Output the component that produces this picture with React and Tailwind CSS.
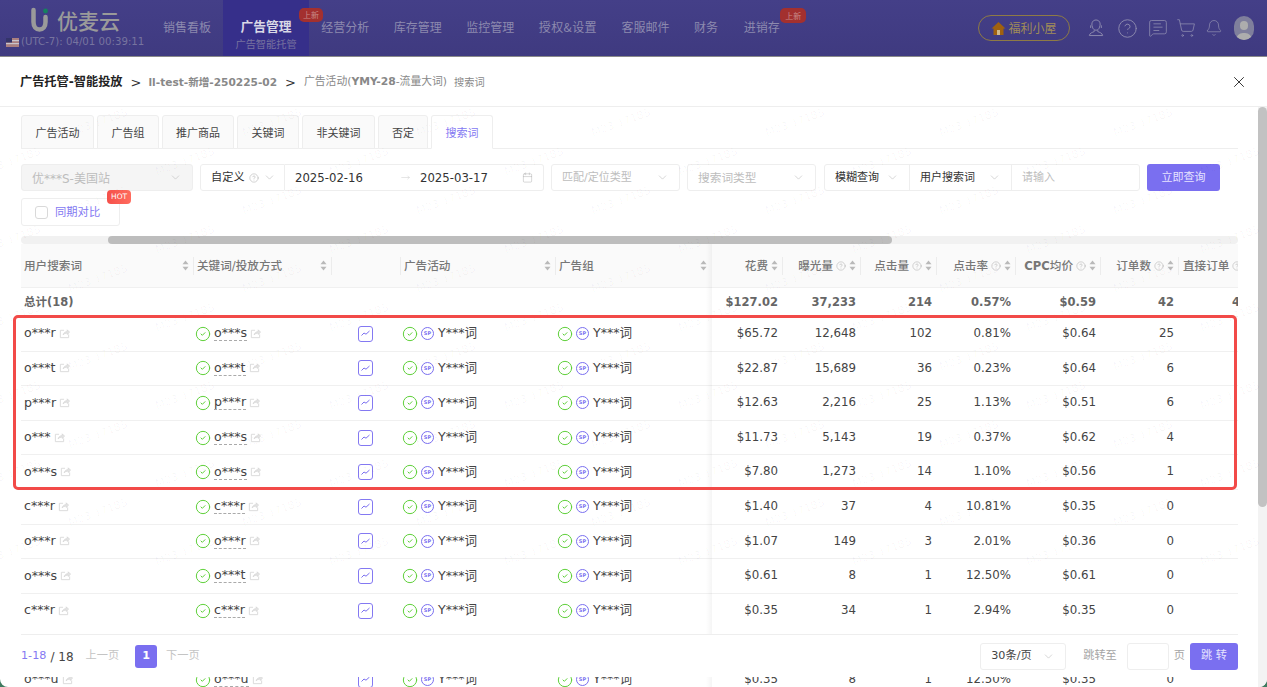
import React from "react";
import { Bell, ChevronDown, CircleCheck, CircleHelp, MessageSquareText, ShoppingCart, X, Calendar, MoveRight } from "lucide-react";

const gridCols =
  "grid grid-cols-[172px_138px_69px_155px_156px_71px_78px_76px_79px_85px_78px_72px]";

const navItems = ["经营分析", "库存管理", "监控管理", "授权&设置", "客服邮件", "财务"];

const tabs = [
  { label: "广告活动", width: "w-[73px]" },
  { label: "广告组", width: "w-[62px]" },
  { label: "推广商品", width: "w-[72px]" },
  { label: "关键词", width: "w-[62px]" },
  { label: "非关键词", width: "w-[73px]" },
  { label: "否定", width: "w-[50px]" },
];

// null = row that sits fully behind the sticky pagination
const rows = [
  ["o***r", "o***s", "$65.72", "12,648", "102", "0.81%", "$0.64", "25"],
  ["o***t", "o***t", "$22.87", "15,689", "36", "0.23%", "$0.64", "6"],
  ["p***r", "p***r", "$12.63", "2,216", "25", "1.13%", "$0.51", "6"],
  ["o***", "o***s", "$11.73", "5,143", "19", "0.37%", "$0.62", "4"],
  ["o***s", "o***s", "$7.80", "1,273", "14", "1.10%", "$0.56", "1"],
  ["c***r", "c***r", "$1.40", "37", "4", "10.81%", "$0.35", "0"],
  ["o***r", "o***r", "$1.07", "149", "3", "2.01%", "$0.36", "0"],
  ["o***s", "o***t", "$0.61", "8", "1", "12.50%", "$0.61", "0"],
  ["c***r", "c***r", "$0.35", "34", "1", "2.94%", "$0.35", "0"],
  null,
  ["o***u", "o***u", "$0.35", "8", "1", "12.50%", "$0.35", "0"],
];

function SortCaret() {
  return (
    <svg width="7" height="11" viewBox="0 0 7 11" className="shrink-0 text-[#b9b9b9]" fill="currentColor">
      <path d="M3.5 0.5 L6.5 4.2 H0.5 Z" />
      <path d="M3.5 10.5 L6.5 6.8 H0.5 Z" />
    </svg>
  );
}

function ShareIcon() {
  return (
    <svg width="11" height="11" viewBox="0 0 12 12" fill="none" stroke="#d9d9d9" strokeWidth="1" className="mb-[1px] shrink-0">
      <path d="M5.5 2.5H1.5V10.5H10.5V7" />
      <path d="M4.5 7.5C5 5 7 4 9 4V2L11.5 4.6L9 7V5.5C7.3 5.5 5.6 6 4.5 7.5Z" fill="#e6e6e6" />
    </svg>
  );
}

function ChartButton() {
  return (
    <span className="flex h-[16px] w-[15px] items-center justify-center rounded-[3px] border border-[#8479f2]">
      <svg width="9" height="7" viewBox="0 0 9 7" fill="none" stroke="#7a6ff0" strokeWidth="1">
        <path d="M0.5 5.5L3 3L5 4.2L8.5 1" />
      </svg>
    </span>
  );
}

function SpBadge() {
  return (
    <span className="flex h-[13px] w-[13px] shrink-0 items-center justify-center rounded-full border border-[#7a6ff0] text-[5px] font-bold leading-none text-[#7a6ff0]">
      SP
    </span>
  );
}

function CampaignCell() {
  return (
    <div className="flex items-center gap-[3px] pl-[2px] text-[12.6px]">
      <CircleCheck size={16} strokeWidth={1.5} className="shrink-0 text-[#5fd03a]" />
      <SpBadge />
      <span className="ml-[1px]">Y***词</span>
    </div>
  );
}

function SelectBox({ label, muted, className }) {
  return (
    <div className={`flex h-[27px] items-center justify-between border border-[#eeeeee] px-[10px] ${className}`}>
      <span className={`pt-[2px] ${muted ? "text-[#bdbdbd]" : "text-[#333]"}`}>{label}</span>
      <ChevronDown size={13} strokeWidth={1} className="text-[#b5b5b5]" />
    </div>
  );
}

function HeadCell({ label, help, right, first }) {
  return (
    <div className={`flex h-[18px] items-center gap-[3px] pr-[4px] ${first ? "" : "border-l border-[#ececec]"} ${right ? "justify-end" : "justify-between pl-[3px]"}`}>
      <span className="whitespace-nowrap pt-[3px]">{label}</span>
      <span className="flex items-center gap-[3px]">
        {help && <CircleHelp size={10} strokeWidth={1} className="text-[#999]" />}
        <SortCaret />
      </span>
    </div>
  );
}

function Watermark() {
  const lines = Array.from({ length: 12 });
  const marks = Array.from({ length: 9 });
  return (
    <div className="pointer-events-none absolute inset-0 flex flex-col gap-[28px] overflow-hidden pt-[60px]">
      {lines.map((_, i) => (
        <div key={i} className={`flex shrink-0 gap-[112px] ${i % 2 ? "ml-[-20px]" : "ml-[67px]"}`}>
          {marks.map((_, j) => (
            <span key={j} className="-rotate-[20deg] whitespace-nowrap text-[11px] leading-none text-black/[0.035]">
              M23/17185
            </span>
          ))}
        </div>
      ))}
    </div>
  );
}

export default function App() {
  return (
    <div className="relative flex h-[687px] w-[1267px] flex-col overflow-hidden bg-[#3f7a5f] font-['DejaVu_Sans','Noto_Sans_CJK_SC',sans-serif] text-[11.8px] text-[#444]">
      {/* top nav, dimmed by the drawer mask */}
      <header className="flex h-[57px] shrink-0 border-b border-[#8a8a8a] bg-gradient-to-b from-[#443f88] to-[#3f3a80] font-['Noto_Sans_CJK_SC',sans-serif] text-[12px] text-[#8c89ae]">
        <div className="flex w-[151px] shrink-0 flex-col pl-[6px] pt-[7px]">
          <div className="flex items-center gap-[7px] pl-[24px]">
            <svg width="20" height="26" viewBox="0 0 20 26" fill="none">
              <path d="M3.5 3V15C3.5 20 6 22.5 9.5 22.5C13 22.5 15.5 20 15.5 15V10" stroke="#9a9a9a" strokeWidth="4.5" strokeLinecap="round" />
              <circle cx="15.5" cy="4" r="2.4" fill="#16805f" />
            </svg>
            <span className="text-[21px] font-medium leading-[26px] text-[#9a9a9a]">优麦云</span>
          </div>
          <div className="mt-[3px] flex items-center gap-[2px] whitespace-nowrap font-['DejaVu_Sans',sans-serif] text-[10.2px] leading-[12px] text-[#77749f]">
            <svg width="13" height="9" viewBox="0 0 13 9" className="shrink-0">
              <rect width="13" height="9" fill="#a97f80" />
              <rect y="2" width="13" height="1.2" fill="#c9c4cc" />
              <rect y="5" width="13" height="1.2" fill="#c9c4cc" />
              <rect width="6" height="4.5" fill="#34346a" />
            </svg>
            (UTC-7): 04/01 00:39:11
          </div>
        </div>
        <nav className="flex">
          <div className="flex items-center px-[12px] pb-[3px]">销售看板</div>
          <div className="relative flex w-[86px] flex-col items-center bg-[#362f8a] pt-[17px]">
            <span className="text-[12.8px] font-bold leading-[18px] text-[#d9d8e6]">广告管理</span>
            <span className="mt-[2px] text-[10.2px] leading-[14px] text-[#77729f]">广告智能托管</span>
            <span className="absolute left-[76px] top-[8px] z-10 whitespace-nowrap rounded-[5px] bg-[#a3302f] px-[4px] text-[8px] leading-[14px] text-[#c88a88]">上新</span>
          </div>
          {navItems.map((n) => (
            <div key={n} className={`flex items-center whitespace-nowrap px-[12.25px] pb-[3px] ${n === "授权&设置" ? "tracking-[0.4px]" : ""}`}>{n}</div>
          ))}
          <div className="relative ml-[1px] flex items-center px-[12.5px] pb-[3px]">
            进销存
            <span className="absolute left-[49px] top-[8px] whitespace-nowrap rounded-[5px] bg-[#a3302f] px-[5px] text-[8px] leading-[15px] text-[#c88a88]">上新</span>
          </div>
        </nav>
        <div className="ml-auto flex items-center pr-[13px]">
          <div className="flex h-[26px] w-[92px] items-center justify-center gap-[2px] rounded-full border border-[#8e7a45] text-[12px] text-[#a08c58]">
            <svg width="15" height="15" viewBox="0 0 15 15">
              <path d="M7.5 1L14.5 7.500H12.500V14H2.500V7.500H0.500Z" fill="#a0610f" />
              <rect x="6" y="9" width="3" height="5" fill="#d0b888" />
            </svg>
            福利小屋
          </div>
          <svg width="16" height="20" viewBox="0 0 18 20" fill="none" stroke="#8c89ae" strokeWidth="1.1" className="ml-[18px]">
            <path d="M5 9C3 3.5 6 1 9 1C12 1 15 3.5 13 9C12.5 11 11 12.5 9 12.5C7 12.5 5.500 11 5 9Z" />
            <path d="M3 7V10M15 7V10M7 12.500V14C5 15 2 15.500 1.500 18.500H16.500C16 15.500 13 15 11 14V12.500" />
          </svg>
          <CircleHelp size={21} strokeWidth={1.1} className="ml-[12.5px]" />
          <MessageSquareText size={20} strokeWidth={1} className="ml-[10.5px]" />
          <ShoppingCart size={20} strokeWidth={1} className="ml-[8px]" />
          <Bell size={18} strokeWidth={1} className="ml-[8.5px]" />
          <span className="relative ml-[11.5px] flex h-[24px] w-[20px] items-start justify-center overflow-hidden rounded-full bg-[#7f7f9c]">
            <span className="mt-[5px] h-[9px] w-[8px] rounded-full bg-[#adadad]" />
            <span className="absolute bottom-[0px] h-[7px] w-[16px] rounded-t-full bg-[#adadad]" />
          </span>
        </div>
      </header>

      {/* drawer */}
      <div className="relative flex min-h-0 flex-1 flex-col overflow-hidden rounded-b-[8px] bg-white">
        <div className="flex h-[50px] shrink-0 items-center border-b border-[#eeeeee] pl-[20px] pr-[19px] pt-[2px] text-[#888]">
          <span className="text-[12.2px] font-bold text-[#222]">广告托管-智能投放</span>
          <span className="ml-[8px] text-[13px] text-[#333]">&gt;</span>
          <span className="ml-[7px] text-[10.6px] font-bold">ll-test-新增-250225-02</span>
          <span className="ml-[8px] text-[13px] text-[#333]">&gt;</span>
          <span className="ml-[8px] text-[10.8px]">广告活动(<b>YMY-28</b>-流量大词)</span>
          <span className="ml-[7px] text-[10.2px]">搜索词</span>
          <X size={18} strokeWidth={1.2} className="mb-[2px] ml-auto text-[#222]" />
        </div>

        <div className="flex min-h-0 flex-1">
          <main className="relative w-[1258px] shrink-0 overflow-hidden pl-[21px] pr-[20px] pt-[8px]">
            <div className="flex h-[34px] gap-[3px] border-b border-[#eeeeee]">
              {tabs.map((t) => (
                <div key={t.label} className={`flex h-[34px] items-center justify-center rounded-t-[3px] border border-[#eeeeee] bg-[#fafafa] font-['Noto_Sans_CJK_SC',sans-serif] text-[11px] text-[#444] ${t.width}`}>
                  {t.label}
                </div>
              ))}
              <div className="flex h-[34px] w-[62px] items-center justify-center rounded-t-[3px] border border-[#eeeeee] border-b-white bg-white font-['Noto_Sans_CJK_SC',sans-serif] text-[11px] text-[#8479f2]">
                搜索词
              </div>
            </div>

            <div className="mt-[15px] flex text-[11.7px]">
              <SelectBox label="优***S-美国站" muted className="w-[172px] rounded-[3px] bg-[#f5f5f5] text-[12px]" />
              <div className="ml-[7px] flex h-[27px] w-[85px] items-center justify-between rounded-l-[3px] border border-[#eeeeee] pl-[10px] pr-[8px]">
                <span className="flex items-center gap-[4px] pt-[2px] text-[11.2px] text-[#333]">
                  自定义
                  <CircleHelp size={10} strokeWidth={1} className="text-[#999]" />
                </span>
                <ChevronDown size={13} strokeWidth={1} className="text-[#b5b5b5]" />
              </div>
              <div className="flex h-[27px] w-[259px] items-center rounded-r-[3px] border border-l-0 border-[#eeeeee] pl-[10px] pr-[10px] text-[#333]">
                <span className="w-[106px] pt-[2px]">2025-02-16</span>
                <MoveRight size={9} strokeWidth={1} className="text-[#bbb]" />
                <span className="ml-[10px] pt-[2px]">2025-03-17</span>
                <Calendar size={11} strokeWidth={1} className="ml-auto text-[#aaa]" />
              </div>
              <SelectBox label="匹配/定位类型" muted className="ml-[7px] w-[129px] rounded-[3px] text-[11px]" />
              <SelectBox label="搜索词类型" muted className="ml-[7px] w-[129px] rounded-[3px]" />
              <SelectBox label="模糊查询" className="ml-[8px] w-[86px] rounded-l-[3px] text-[11px]" />
              <SelectBox label="用户搜索词" className="ml-[-1px] w-[103px] text-[11px]" />
              <div className="ml-[-1px] flex h-[27px] w-[129px] items-center rounded-r-[3px] border border-[#eeeeee] pl-[10px] pt-[2px] text-[11px] text-[#bdbdbd]">请输入</div>
              <button className="ml-[7px] h-[27px] w-[73px] rounded-[3px] bg-[#7a6ff0] pt-[2px] text-[11px] text-[#e6e3ff]">立即查询</button>
            </div>

            <div className="relative mt-[7px] flex h-[28px] w-[99px] items-center gap-[7px] rounded-[3px] border border-[#eeeeee] pl-[13px] text-[11.3px] text-[#8479f2]">
              <span className="h-[13px] w-[13px] rounded-[3px] border border-[#d9d9d9]" />
              <span className="pt-[2px]">同期对比</span>
              <span className="absolute left-[85px] top-[-9px] rounded-[4px] bg-gradient-to-r from-[#f5504a] to-[#ff6b5e] px-[4px] text-[7.500px] leading-[14px] text-white">HOT</span>
            </div>

            <div className="mt-[10px] h-[8px] rounded-full bg-[#f1f1f1] pl-[87px] pr-[346px]">
              <div className="h-[8px] rounded-full bg-[#bdbdbd]" />
            </div>

            <div className="w-[1217px] overflow-hidden">
              <div className={`${gridCols} h-[44px] items-center border-b border-[#f0f0f0] bg-[#fafafa] text-[11.6px] font-medium text-[#777]`}>
                <HeadCell label="用户搜索词" first />
                <HeadCell label="关键词/投放方式" />
                <div className="h-[18px] border-l border-[#ececec]" />
                <HeadCell label="广告活动" />
                <HeadCell label="广告组" />
                <HeadCell label="花费" right first />
                <HeadCell label="曝光量" help right />
                <HeadCell label="点击量" help right />
                <HeadCell label="点击率" help right />
                <HeadCell label={<><b>CPC</b>均价</>} help right />
                <HeadCell label="订单数" help right />
                <div className="flex h-[18px] items-center gap-[3px] whitespace-nowrap border-l border-[#ececec] pl-[4px]">
                  <span className="pt-[3px]">直接订单</span>
                  <CircleHelp size={10} strokeWidth={1} className="shrink-0 text-[#999]" />
                </div>
              </div>

              <div className={`${gridCols} h-[28px] items-center pt-[2px] text-[11.5px] font-bold text-[#666]`}>
                <div className="pl-[3px]">总计(18)</div>
                <div />
                <div />
                <div />
                <div />
                <div className="pr-[4px] text-right">$127.02</div>
                <div className="pr-[4px] text-right">37,233</div>
                <div className="pr-[4px] text-right">214</div>
                <div className="pr-[4px] text-right">0.57%</div>
                <div className="pr-[4px] text-right">$0.59</div>
                <div className="pr-[4px] text-right">42</div>
                <div className="pr-[2px] text-right">42</div>
              </div>

              {rows.map((r, i) =>
                r ? (
                  <div key={i} className={`${gridCols} h-[34.6px] items-center border-t border-[#f0f0f0]`}>
                    <div className="flex items-center gap-[3px] pl-[3px] text-[12.6px]">
                      {r[0]}
                      <ShareIcon />
                    </div>
                    <div className="flex items-center gap-[3px] pl-[2px] text-[12.6px]">
                      <CircleCheck size={16} strokeWidth={1.5} className="shrink-0 text-[#5fd03a]" />
                      <span className="border-b border-dashed border-[#aaa] leading-[14px]">{r[1]}</span>
                      <ShareIcon />
                    </div>
                    <div className="flex justify-center"><ChartButton /></div>
                    <CampaignCell />
                    <CampaignCell />
                    {r.slice(2).map((v, k) => (
                      <div key={k} className="pr-[4px] text-right">{v}</div>
                    ))}
                    <div />
                  </div>
                ) : (
                  <div key={i} className="h-[34.6px]" />
                )
              )}
            </div>

            {/* frozen right columns edge */}
            <div className="pointer-events-none absolute left-[706px] top-[137px] h-[460px] w-[6px] bg-gradient-to-r from-transparent to-black/[0.04]" />

            {/* sticky pagination over the table */}
            <div className="absolute bottom-[10px] left-[21px] right-[20px] flex h-[43px] items-center border-t border-[#eeeeee] bg-white pt-[1px] text-[11.2px]">
              <span className="text-[#8479f2]">1-18</span>
              <span className="ml-[4px] text-[12px] text-[#444]">/ 18</span>
              <span className="ml-[12px] text-[#c4c4c4]">上一页</span>
              <span className="ml-[16px] flex h-[23px] w-[22px] items-center justify-center rounded-[3px] bg-[#7a6ff0] font-bold text-white">1</span>
              <span className="ml-[9px] text-[#c4c4c4]">下一页</span>
              <div className="ml-auto flex items-center">
                <div className="flex h-[27px] w-[86px] items-center justify-between rounded-[3px] border border-[#eeeeee] px-[10px] text-[#444]">
                  30条/页
                  <ChevronDown size={13} strokeWidth={1} className="text-[#b5b5b5]" />
                </div>
                <span className="ml-[17px] text-[#a5a5a5]">跳转至</span>
                <span className="ml-[10px] h-[27px] w-[42px] rounded-[3px] border border-[#eeeeee]" />
                <span className="ml-[5px] text-[#a5a5a5]">页</span>
                <button className="ml-[5px] h-[27px] w-[48px] rounded-[3px] bg-[#7a6ff0] text-[#e6e3ff]">跳 转</button>
              </div>
            </div>
          </main>

          <div className="w-[9px] shrink-0 bg-[#f3f3f3]">
            <div className="h-[400px] rounded-full bg-[#c2c2c2]" />
          </div>
        </div>

        <Watermark />
      </div>

      {/* red annotation box from the source screenshot */}
      <div className="pointer-events-none absolute left-[13px] top-[315px] h-[175px] w-[1224px] rounded-[5px] border-[3px] border-[#f24a48]" />
    </div>
  );
}
